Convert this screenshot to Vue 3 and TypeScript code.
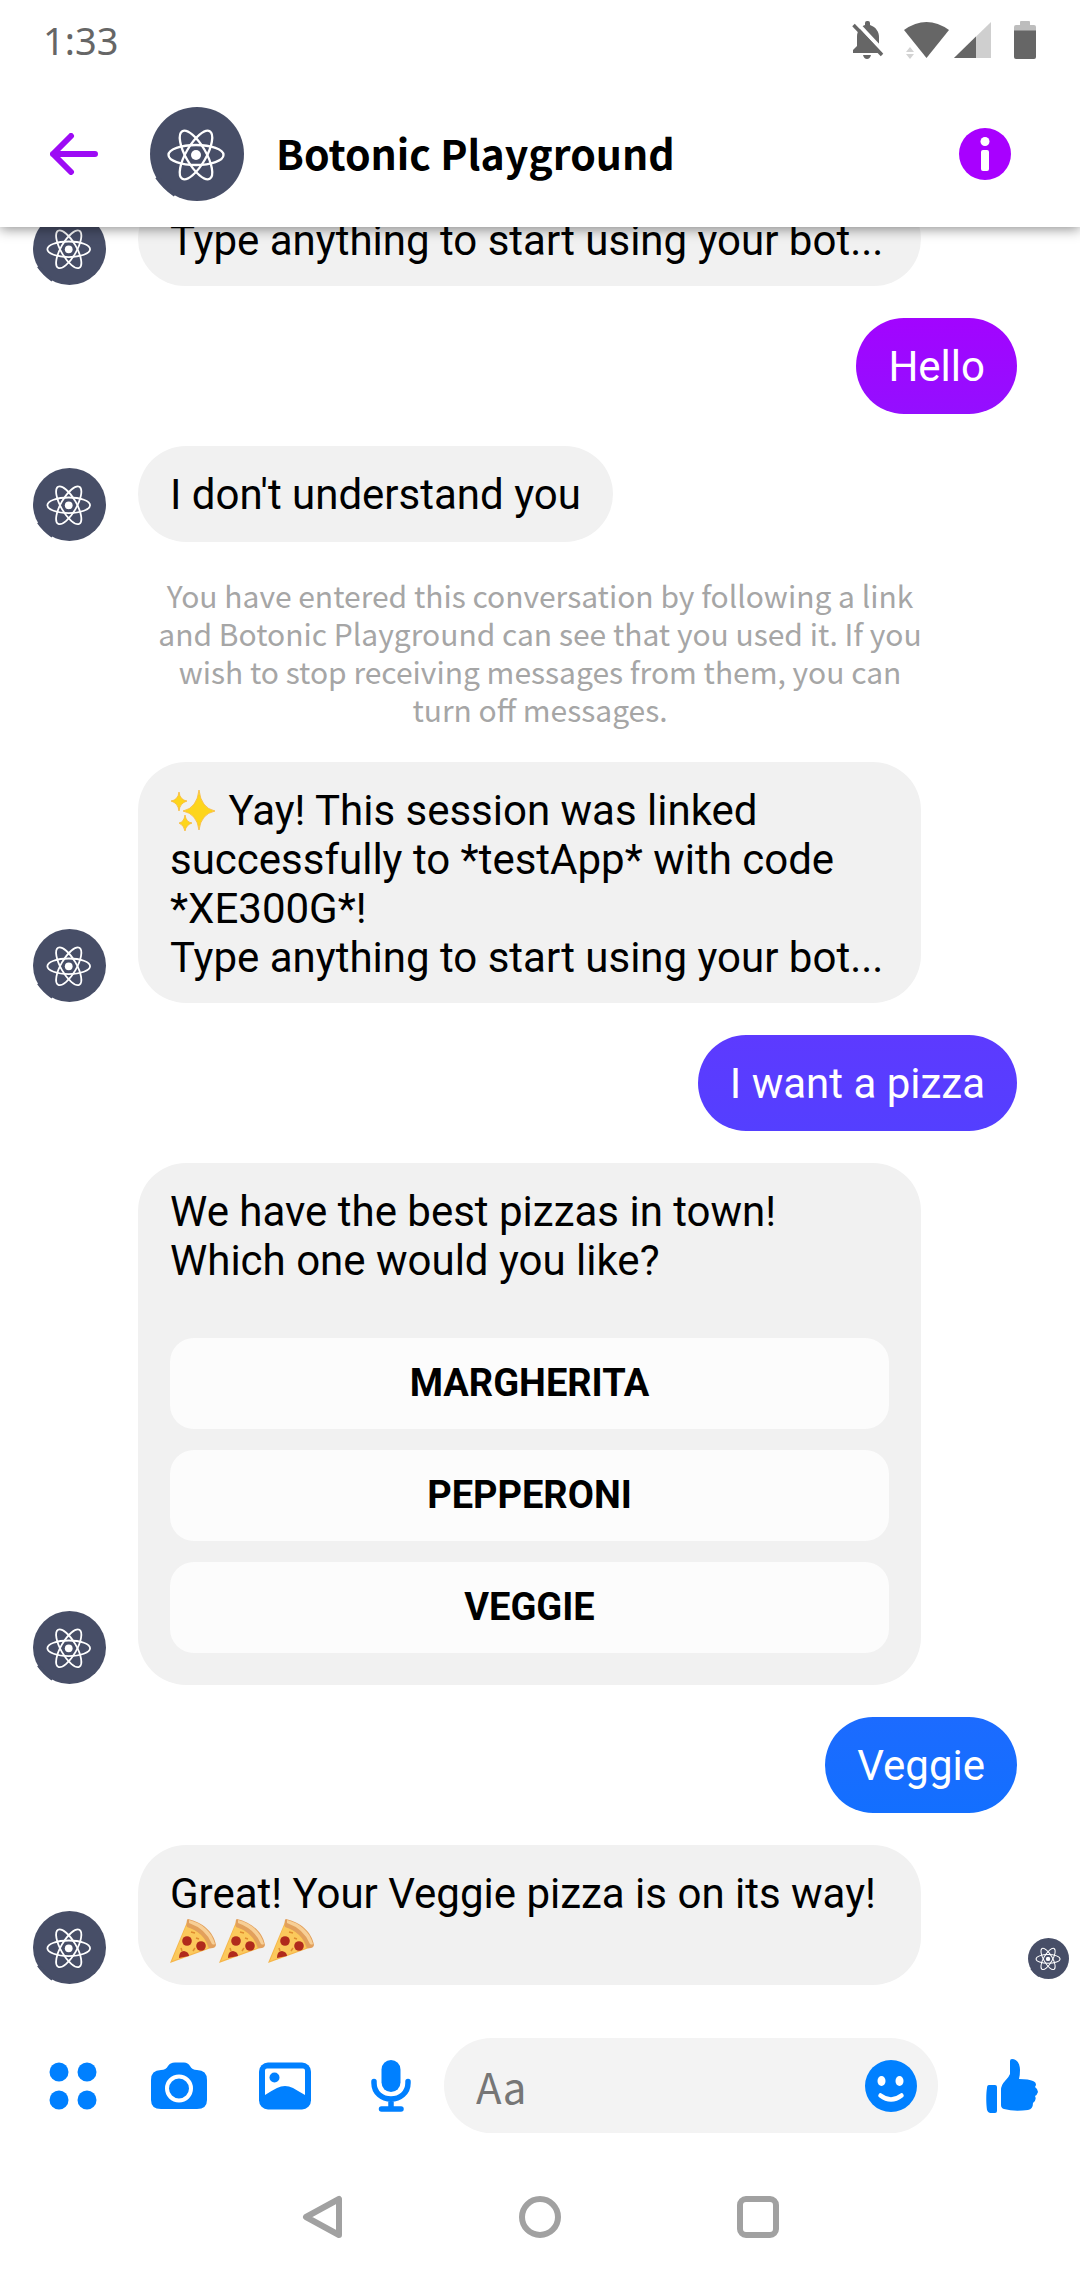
<script setup lang="ts">
import { defineComponent, h, nextTick, onMounted, ref } from 'vue'

interface Message {
  id: number
  from: 'bot' | 'user' | 'notice'
  lines: string[]
  tone?: 'violet' | 'indigo' | 'blue'
  sparkle?: boolean
  pizzas?: number
  choices?: string[]
  wide?: boolean
  seen?: boolean
}

const messages: Message[] = [
  { id: 1, from: 'bot', wide: true, lines: ['Type anything to start using your bot...'] },
  { id: 2, from: 'user', tone: 'violet', lines: ['Hello'] },
  { id: 3, from: 'bot', lines: ["I don't understand you"] },
  {
    id: 4,
    from: 'notice',
    lines: [
      'You have entered this conversation by following a link and Botonic Playground can see that you used it. If you wish to stop receiving messages from them, you can turn off messages.',
    ],
  },
  {
    id: 5,
    from: 'bot',
    wide: true,
    sparkle: true,
    lines: [
      'Yay! This session was linked successfully to *testApp* with code *XE300G*!',
      'Type anything to start using your bot...',
    ],
  },
  { id: 6, from: 'user', tone: 'indigo', lines: ['I want a pizza'] },
  {
    id: 7,
    from: 'bot',
    wide: true,
    lines: ['We have the best pizzas in town!', 'Which one would you like?'],
    choices: ['MARGHERITA', 'PEPPERONI', 'VEGGIE'],
  },
  { id: 8, from: 'user', tone: 'blue', lines: ['Veggie'] },
  { id: 9, from: 'bot', wide: true, seen: true, pizzas: 3, lines: ['Great! Your Veggie pizza is on its way!'] },
]

const draft = ref('')
const feed = ref<HTMLElement | null>(null)

// Bot avatar: an atom on a slate disc, drawn at whatever size its class sets.
const BotAvatar = defineComponent({
  setup: () => () =>
    h('svg', { viewBox: '0 0 94 94', 'aria-hidden': 'true' }, [
      h('circle', { cx: 47, cy: 47, r: 47, fill: '#474e67' }),
      h('path', { d: 'M5 71 Q11 83 24 89 L20 94 H0 V71 Z', fill: '#fff' }),
      h('path', { d: 'M7 70 Q14 80 25 88', stroke: '#474e67', 'stroke-width': 4, fill: 'none' }),
      h('g', { fill: 'none', stroke: '#fff', 'stroke-width': 2.3 }, [
        h('ellipse', { cx: 46, cy: 48, rx: 27.5, ry: 10 }),
        h('ellipse', { cx: 46, cy: 48, rx: 27.5, ry: 10, transform: 'rotate(60 46 48)' }),
        h('ellipse', { cx: 46, cy: 48, rx: 27.5, ry: 10, transform: 'rotate(120 46 48)' }),
      ]),
      h('circle', { cx: 46, cy: 48, r: 5, fill: '#fff' }),
    ]),
})

onMounted(async () => {
  await nextTick()
  if (feed.value) feed.value.scrollTop = feed.value.scrollHeight
})
</script>

<template>
  <div class="app">
    <header class="top">
      <div class="status">
        <span class="clock">1:33</span>
        <div class="status-icons">
          <svg class="bell" viewBox="0 0 32 38" aria-hidden="true">
            <path d="M13 4V2q0-2 2-2h1q2 0 2 2v2c6 2 9 7 9 12v8l4 5v3H1v-3l4-4V16C5 10 8 6 13 4Z" fill="#666" />
            <path d="M11 34h8q-1 4-4 4t-4-4Z" fill="#666" />
            <path d="M4 1 34 33" stroke="#fff" stroke-width="4" />
            <path d="M1.500 4 30 34" stroke="#666" stroke-width="3.500" />
          </svg>
          <svg class="wifi" viewBox="0 0 45 36" aria-hidden="true">
            <path d="M0 8Q22.500-8 45 8L22.500 36Z" fill="#666" />
            <path d="M2 30l4-5 4 5ZM2 32h8l-4 5Z" fill="#d3d3d3" />
          </svg>
          <svg class="signal" viewBox="0 0 37 36" aria-hidden="true">
            <path d="M0 36 37 0V36Z" fill="#cfcfcf" />
            <path d="M0 36 22 14.600V36Z" fill="#666" />
          </svg>
          <svg class="battery" viewBox="0 0 22 38" aria-hidden="true">
            <path d="M6 4V1q0-1 1-1h8q1 0 1 1v3h4q2 0 2 2v4H0V6q0-2 2-2Z" fill="#bdbdbd" />
            <path d="M0 9.500H22V36q0 2-2 2H2q-2 0-2-2Z" fill="#666" />
          </svg>
        </div>
      </div>
      <div class="bar">
        <button class="icon-btn back" type="button" aria-label="Back">
          <svg width="48" height="42" viewBox="0 0 48 42" fill="none" stroke="#9d0bf5" stroke-width="6" stroke-linecap="round" stroke-linejoin="round">
            <path d="M21 3 3 21 21 39M3 21H45" />
          </svg>
        </button>
        <BotAvatar class="avatar-lg" />
        <h1 class="title">Botonic Playground</h1>
        <button class="icon-btn" type="button" aria-label="Conversation details">
          <svg width="52" height="52" viewBox="0 0 52 52">
            <circle cx="26" cy="26" r="26" fill="#a800ff" />
            <circle cx="26" cy="13.500" r="4.500" fill="#fff" />
            <rect x="22" y="22" width="8" height="21" rx="2" fill="#fff" />
          </svg>
        </button>
      </div>
    </header>

    <main ref="feed" class="feed">
      <template v-for="m in messages" :key="m.id">
        <p v-if="m.from === 'notice'" class="notice">{{ m.lines[0] }}</p>

        <div v-else-if="m.from === 'user'" class="row-user">
          <div class="bubble mine" :class="m.tone">{{ m.lines[0] }}</div>
        </div>

        <div v-else class="row-bot">
          <BotAvatar class="avatar-md" />
          <div class="bubble theirs" :class="{ wide: m.wide, card: m.choices }">
            <p v-for="(line, i) in m.lines" :key="i" class="line">
              <svg v-if="m.sparkle && i === 0" class="sparkle" viewBox="0 0 48 42" role="img" aria-label="Sparkles">
                <g fill="#fdd51c" stroke="#f9b93a" stroke-width="0.800">
                  <path d="M29 1Q31 19 45 22Q31 25 29 41Q27 25 13 22Q27 19 29 1Z" />
                  <path d="M9 3Q10 11 17 12Q10 14 9 22Q8 14 1 12Q8 11 9 3Z" />
                  <path d="M15 26Q16 33 22 34Q16 36 15 42Q14 36 9 34Q14 33 15 26Z" />
                </g>
              </svg>
              {{ line }}
            </p>
            <div v-if="m.pizzas" class="pizzas">
              <svg v-for="n in m.pizzas" :key="n" width="49" height="46" viewBox="0 0 49 46" role="img" aria-label="Pizza">
                <path d="M17 4 0 45 41 30Q38 12 17 4Z" fill="#f5b54a" />
                <path d="M16 8 2 43 38 30Q35 15 16 8Z" fill="#fbc95c" />
                <path d="M18 1C32 4 44 14 46 27Q45 31 39 30Q34 14 17 9Q16 1 18 1Z" fill="#e2a05c" />
                <path d="M19 2C32 5 42 14 45 26Q44 27 42 26Q36 11 19 5Z" fill="#f7cf96" />
                <circle cx="17" cy="23" r="4.800" fill="#b02a1c" />
                <circle cx="31" cy="28" r="4.800" fill="#b02a1c" />
                <path d="M9 40Q9 33 14 33Q19 34 19 38Z" fill="#b02a1c" />
                <path d="M21 14l4 1M26 20l3 1M23 33l2-3M11 30l1 3" stroke="#e08d2e" stroke-width="1.500" />
              </svg>
            </div>
            <div v-if="m.choices" class="choices">
              <button v-for="c in m.choices" :key="c" class="choice" type="button">{{ c }}</button>
            </div>
          </div>
          <BotAvatar v-if="m.seen" class="avatar-sm" />
        </div>
      </template>
    </main>

    <form class="composer" @submit.prevent>
      <button class="tool" type="button" aria-label="More">
        <svg width="48" height="48" viewBox="0 0 48 48" fill="#0080ff">
          <circle cx="10" cy="10" r="9.500" /><circle cx="38" cy="10" r="9.500" />
          <circle cx="10" cy="38" r="9.500" /><circle cx="38" cy="38" r="9.500" />
        </svg>
      </button>
      <button class="tool" type="button" aria-label="Camera">
        <svg width="56" height="48" viewBox="0 0 56 48">
          <path d="M10 8Q15 8 17 4Q19 .5 24 .5H33Q37 .5 39 4Q41 8 46 8Q56 8 56 18V38Q56 47 46 47H10Q0 47 0 38V18Q0 8 10 8Z" fill="#0080ff" />
          <circle cx="28" cy="26.500" r="12" fill="#0080ff" stroke="#fff" stroke-width="4" />
        </svg>
      </button>
      <button class="tool" type="button" aria-label="Gallery">
        <svg width="52" height="48" viewBox="0 0 52 48">
          <rect y="0.500" width="52" height="47" rx="9" fill="#0080ff" />
          <path d="M8 6.500H44Q46 6.500 46 8.500V33Q39 29 34 26Q26 22 18 26Q12 29 6 33V8.500Q6 6.500 8 6.500Z" fill="#fff" />
          <circle cx="15.500" cy="15.500" r="5" fill="#0080ff" />
        </svg>
      </button>
      <button class="tool" type="button" aria-label="Voice message">
        <svg width="40" height="52" viewBox="0 0 40 52" fill="none" stroke="#0080ff" stroke-width="5.500" stroke-linecap="round">
          <rect x="10.500" y="0" width="19" height="32" rx="9.500" fill="#0080ff" stroke="none" />
          <path d="M3 21.500V23C3 33 11 39 20 39S37 33 37 23V21.500M20 39V49M10.500 49H30" />
        </svg>
      </button>
      <div class="field">
        <input v-model="draft" class="input" type="text" placeholder="Aa" aria-label="Message" />
        <button class="icon-btn" type="button" aria-label="Emoji">
          <svg width="52" height="52" viewBox="0 0 52 52">
            <circle cx="26" cy="26" r="26" fill="#0080ff" />
            <ellipse cx="16.500" cy="21" rx="4" ry="5" fill="#fff" />
            <ellipse cx="34.500" cy="21" rx="4" ry="5" fill="#fff" />
            <path d="M15.500 35.500Q26 43.500 36.500 35.500" fill="none" stroke="#fff" stroke-width="4.500" stroke-linecap="round" />
          </svg>
        </button>
      </div>
      <button class="tool like" type="button" aria-label="Send a like">
        <svg width="56" height="56" viewBox="0 0 56 56" fill="#0080ff">
          <path d="M5 27h6q2 0 2 2v24q0 2-2 2H6q-2 0-3-3c-1-6-1-17 0-22q0-3 2-3Z" />
          <path d="M26 3Q26 1 28 1C34 1 36 7 36 12Q36 17 35 21Q45 21 49 23Q52 24 52 27L51 29Q54 31 54 34Q53 37 51 38Q53 42 49 45Q49 51 44 52Q30 54 20 51Q17 50 17 47V32Q17 27 21 23Q25 19 26 16Z" />
        </svg>
      </button>
    </form>

    <nav class="sysnav" aria-label="System">
      <button class="sysbtn" type="button" aria-label="Back">
        <svg width="42" height="44" viewBox="0 0 42 44" fill="none" stroke="#a1a1a1" stroke-width="6" stroke-linejoin="round">
          <path d="M38 4V40L5 22Z" />
        </svg>
      </button>
      <button class="sysbtn" type="button" aria-label="Home">
        <svg width="42" height="42" viewBox="0 0 42 42" fill="none" stroke="#a1a1a1" stroke-width="6"><circle cx="21" cy="21" r="18" /></svg>
      </button>
      <button class="sysbtn" type="button" aria-label="Recent apps">
        <svg width="42" height="42" viewBox="0 0 42 42" fill="none" stroke="#a1a1a1" stroke-width="6"><rect x="3" y="3" width="36" height="36" rx="6" /></svg>
      </button>
    </nav>
  </div>
</template>

<style>
body {
  margin: 0;
  background: #fff;
}
</style>

<style scoped>
.app {
  display: flex;
  flex-direction: column;
  height: 100vh;
  background: #fff;
  color: #000;
  font-family: Roboto, 'Liberation Sans', sans-serif;
}

button {
  margin: 0;
  padding: 0;
  border: 0;
  background: none;
  font: inherit;
  color: inherit;
}

svg {
  display: block;
  flex: none;
}

.top {
  position: relative;
  z-index: 1;
  background: #fff;
  box-shadow: 0 2px 12px rgba(0, 0, 0, 0.45);
}

.status {
  display: flex;
  align-items: center;
  justify-content: space-between;
  height: 80px;
  padding: 0 44px 0 43px;
}

.clock {
  font-family: 'Noto Sans', sans-serif;
  font-size: 38px;
  color: #666;
}

.status-icons {
  display: flex;
  align-items: center;
}

.bell {
  width: 32px;
  height: 38px;
  margin-right: 20px;
}

.wifi {
  width: 45px;
  height: 36px;
  margin-right: 5px;
  overflow: visible;
}

.signal {
  width: 37px;
  height: 36px;
  margin-right: 23px;
}

.battery {
  width: 22px;
  height: 38px;
}

.bar {
  display: flex;
  align-items: center;
  height: 147px;
  padding: 0 69px 0 50px;
}

.icon-btn {
  flex: none;
}

.back {
  margin-right: 52px;
}

.avatar-lg {
  width: 94px;
  height: 94px;
  margin-right: 32px;
}

.title {
  flex: 1;
  margin: 0;
  padding-bottom: 4px;
  font-family: 'Noto Sans CJK SC', sans-serif;
  font-size: 41px;
  line-height: 60px;
  font-weight: 700;
}

.feed {
  display: flex;
  flex: 1;
  flex-direction: column;
  gap: 32px;
  min-height: 0;
  padding-bottom: 21px;
  overflow-y: auto;
  scrollbar-width: none;
}

.feed > * {
  flex: none;
}

.feed > :first-child {
  margin-top: auto;
}

.row-bot {
  display: grid;
  grid-template-columns: 73px minmax(0, 1fr) 127px;
  column-gap: 32px;
  align-items: end;
  padding-left: 33px;
}

.row-user {
  display: flex;
  justify-content: flex-end;
  padding-right: 63px;
}

.avatar-md {
  width: 73px;
  height: 73px;
  margin-bottom: 1px;
}

.avatar-sm {
  justify-self: end;
  width: 41px;
  height: 41px;
  margin: 0 11px 6px 0;
}

.bubble {
  box-sizing: border-box;
  min-height: 96px;
  padding: 24px 32px 21px;
  border-radius: 48px;
  font-size: 42px;
  line-height: 49px;
}

.theirs {
  justify-self: start;
  background: #f1f1f1;
}

.wide {
  justify-self: stretch;
  min-height: 0;
}

.mine {
  color: #fff;
}

.violet {
  background: linear-gradient(#a204ff, #940fff);
}

.indigo {
  background: linear-gradient(#5d3aff, #543fff);
}

.blue {
  background: linear-gradient(#1c6bff, #136fff);
}

.line {
  margin: 0;
}

.sparkle {
  display: inline-block;
  width: 48px;
  height: 42px;
  vertical-align: -6px;
}

.pizzas {
  display: flex;
}

.choices {
  display: flex;
  flex-direction: column;
  gap: 21px;
  margin-top: 53px;
}

.card {
  padding-bottom: 32px;
}

.choice {
  height: 91px;
  border-radius: 24px;
  background: #fcfcfc;
  font-size: 38px;
  font-weight: 700;
}

.notice {
  margin: 2px 150px;
  font-family: 'Noto Sans CJK SC', sans-serif;
  font-size: 30px;
  line-height: 38px;
  text-align: center;
  color: #a6a6a6;
}

.composer {
  display: flex;
  align-items: center;
  padding: 32px 0 21px 20px;
}

.tool {
  display: flex;
  flex: none;
  align-items: center;
  justify-content: center;
  width: 106px;
  height: 95px;
}

.field {
  display: flex;
  flex: 1;
  align-items: center;
  min-width: 0;
  height: 95px;
  box-sizing: border-box;
  padding: 0 21px 0 32px;
  border-radius: 48px;
  background: #f3f3f3;
}

.input {
  flex: 1;
  min-width: 0;
  padding: 0;
  border: 0;
  outline: 0;
  background: none;
  font-family: 'Noto Sans CJK SC', sans-serif;
  font-size: 42px;
  color: #000;
}

.input::placeholder {
  color: #767676;
  opacity: 1;
}

.like {
  box-sizing: border-box;
  width: 142px;
  padding-left: 6px;
}

.sysnav {
  display: flex;
  justify-content: center;
  height: 126px;
}

.sysbtn {
  display: flex;
  align-items: center;
  justify-content: center;
  width: 218px;
}
</style>
